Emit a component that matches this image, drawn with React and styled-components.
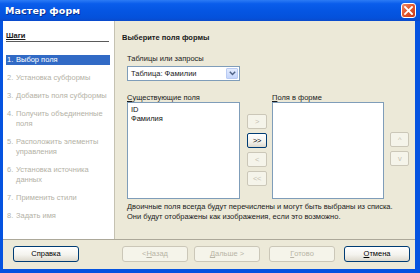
import React from 'react'
import styled, { createGlobalStyle } from 'styled-components'

const Global = createGlobalStyle`
    html, body {
        margin:0;
        padding:0;
        background:#fff;
    }
    body {
        font-family:"Liberation Sans", Arial, sans-serif;
        font-size:7.5px;
        color:#1A1A1A;
    }
`

const Window = styled.div`
    width:420px;
    height:273px;
    display:flex;
    flex-direction:column;
    background:#0553E0;
    overflow:hidden;
`

const TitleBar = styled.div`
    height:21px;
    flex:none;
    display:flex;
    align-items:center;
    justify-content:space-between;
    padding:0 4px 0 5px;
    box-sizing:border-box;
    background:linear-gradient(#2C7BF5 0%, #0A5DEB 18%, #0556E3 50%, #0451DB 85%, #0A4ACB 100%);
`

const Caption = styled.span`
    color:#fff;
    font-family:"DejaVu Sans", Verdana, sans-serif;
    font-weight:bold;
    font-size:9.5px;
    letter-spacing:0.1px;
    text-shadow:1px 1px 0 #0A2F8F;
`

const CloseBox = styled.div`
    width:15px;
    height:15px;
    box-sizing:border-box;
    border:1px solid #fff;
    border-radius:3px;
    background:linear-gradient(135deg, #F08A6A 0%, #E25A30 45%, #C8391A 100%);
    display:flex;
    align-items:center;
    justify-content:center;
`

const Frame = styled.div`
    flex:1;
    display:flex;
    flex-direction:column;
    margin:0 5px 4px 3px;
    background:#ECE9D8;
`

const Main = styled.div`
    height:218px;
    display:flex;
    border-bottom:1px solid #ACA899;
`

const Sidebar = styled.div`
    width:112px;
    flex:none;
    background:#fff;
    border-right:1px solid #C5C2B2;
    padding:10px 4px 0 3px;
    box-sizing:border-box;
`

const SideHead = styled.div`
    font-weight:bold;
    text-decoration:underline;
    line-height:10px;
    border-bottom:1px solid #5A5A5A;
    margin-right:1px;
`

const Steps = styled.div`
    margin-top:13px;
    display:flex;
    flex-direction:column;
    gap:8px;
`

const Step = styled.div`
    display:flex;
    line-height:10px;
    padding-left:1px;
    white-space:nowrap;
    color:${({ active }) => active ? '#fff' : '#B4B2A6'};
    background:${({ active }) => active ? '#316AC5' : 'transparent'};
`

const StepNum = styled.span`
    width:9px;
    flex:none;
`

const StepText = styled.span`
    display:flex;
    flex-direction:column;
`

const Panel = styled.div`
    flex:1;
    padding:12px 0 0 7px;
    display:flex;
    flex-direction:column;
`

const Heading = styled.div`
    font-weight:bold;
    line-height:10px;
`

const Indent = styled.div`
    padding-left:5px;
    display:flex;
    flex-direction:column;
`

const Label = styled.div`
    line-height:9px;
    margin-top:${({ top }) => top}px;
`

const Select = styled.div`
    margin-top:3px;
    width:113px;
    height:15px;
    box-sizing:border-box;
    border:1px solid #7F9DB9;
    background:#fff;
    display:flex;
    align-items:center;
    justify-content:space-between;
    padding:1px 1px 1px 3px;
`

const DropBtn = styled.div`
    width:12px;
    height:11px;
    box-sizing:border-box;
    border:1px solid #B9CBF3;
    border-radius:1px;
    background:linear-gradient(#E3EBFD, #C4D5FB);
    display:flex;
    align-items:center;
    justify-content:center;
`

const Columns = styled.div`
    display:flex;
`

const Col = styled.div`
    display:flex;
    flex-direction:column;
`

const ListBox = styled.div`
    width:${({ w }) => w}px;
    height:97px;
    box-sizing:border-box;
    border:1px solid #7F9DB9;
    background:#fff;
    padding:2px 3px;
    line-height:9px;
    color:#111;
`

const BtnStack = styled.div`
    display:flex;
    flex-direction:column;
    gap:${({ gap }) => gap}px;
    padding-top:${({ top }) => top}px;
    margin:0 ${({ right }) => right}px 0 ${({ left }) => left}px;
`

const SmallBtn = styled.div`
    width:${({ w }) => w}px;
    height:15px;
    box-sizing:border-box;
    border:1px solid ${({ on }) => on ? '#003C74' : '#CBC7B8'};
    border-radius:2px;
    background:${({ on }) => on ? 'linear-gradient(#FFFFFF, #F3F2EC 60%, #DCD8CC)' : '#F5F4EA'};
    color:${({ on }) => on ? '#000' : '#C5C2B2'};
    display:flex;
    align-items:center;
    justify-content:center;
    letter-spacing:-0.5px;
`

const Note = styled.div`
    margin-top:3px;
    line-height:10px;
`

const Footer = styled.div`
    flex:1;
    display:flex;
    align-items:center;
    padding:0 0 1px 10px;
`

const Button = styled.div`
    width:66px;
    height:16px;
    box-sizing:border-box;
    margin-left:${({ gap }) => gap}px;
    border:1px solid ${({ on }) => on ? '#003C74' : '#CBC7B8'};
    border-radius:3px;
    background:${({ on }) => on ? 'linear-gradient(#FFFFFF, #F4F3EE 55%, #DDD9CD)' : '#F5F4EA'};
    color:${({ on }) => on ? '#000' : '#B8B5A6'};
    display:flex;
    align-items:center;
    justify-content:center;
    line-height:10px;
`

const steps = [
    ['1.', ['Выбор поля']],
    ['2.', ['Установка субформы']],
    ['3.', ['Добавить поля субформы']],
    ['4.', ['Получить объединенные', 'поля']],
    ['5.', ['Расположить элементы', 'управления']],
    ['6.', ['Установка источника', 'данных']],
    ['7.', ['Применить стили']],
    ['8.', ['Задать имя']],
]

const App = () => {
    return (
        <Window>
            <Global />
            <TitleBar>
                <Caption>Мастер форм</Caption>
                <CloseBox>
                    <svg width="9" height="9" viewBox="0 0 9 9">
                        <path d="M1 1 L8 8 M8 1 L1 8" stroke="#fff" strokeWidth="1.8" strokeLinecap="square" />
                    </svg>
                </CloseBox>
            </TitleBar>
            <Frame>
                <Main>
                    <Sidebar>
                        <SideHead>Шаги</SideHead>
                        <Steps>
                            {steps.map(([n, lines], i) => (
                                <Step key={i} active={i === 0}>
                                    <StepNum>{n}</StepNum>
                                    <StepText>
                                        {lines.map((l, j) => <span key={j}>{l}</span>)}
                                    </StepText>
                                </Step>
                            ))}
                        </Steps>
                    </Sidebar>
                    <Panel>
                        <Heading>Выберите поля формы</Heading>
                        <Indent>
                            <Label top={11}>Таблицы или запросы</Label>
                            <Select>
                                <span>Таблица: Фамилии</span>
                                <DropBtn>
                                    <svg width="7" height="5" viewBox="0 0 7 5">
                                        <path d="M0.8 0.8 L3.5 3.6 L6.2 0.8" stroke="#4D6185" strokeWidth="1.4" fill="none" />
                                    </svg>
                                </DropBtn>
                            </Select>
                            <Columns>
                                <Col>
                                    <Label top={12}><u>С</u>уществующие поля</Label>
                                    <ListBox w={113}>
                                        <div>ID</div>
                                        <div>Фамилия</div>
                                    </ListBox>
                                </Col>
                                <BtnStack top={33} gap={4} left={7} right={5}>
                                    <SmallBtn w={20}>&gt;</SmallBtn>
                                    <SmallBtn w={20} on>&gt;&gt;</SmallBtn>
                                    <SmallBtn w={20}>&lt;</SmallBtn>
                                    <SmallBtn w={20}>&lt;&lt;</SmallBtn>
                                </BtnStack>
                                <Col>
                                    <Label top={12}><u>П</u>оля в форме</Label>
                                    <ListBox w={112} />
                                </Col>
                                <BtnStack top={51} gap={4} left={6} right={0}>
                                    <SmallBtn w={19}>^</SmallBtn>
                                    <SmallBtn w={19}>v</SmallBtn>
                                </BtnStack>
                            </Columns>
                            <Note>
                                Двоичные поля всегда будут перечислены и могут быть выбраны из списка.<br />
                                Они будут отображены как изображения, если это возможно.
                            </Note>
                        </Indent>
                    </Panel>
                </Main>
                <Footer>
                    <Button on gap={0}>Справка</Button>
                    <Button gap={43}>&lt; <u>Н</u>азад</Button>
                    <Button gap={6}><u>Д</u>альше &gt;</Button>
                    <Button gap={9}><u>Г</u>отово</Button>
                    <Button on gap={9}><u>О</u>тмена</Button>
                </Footer>
            </Frame>
        </Window>
    )
}

export default App
